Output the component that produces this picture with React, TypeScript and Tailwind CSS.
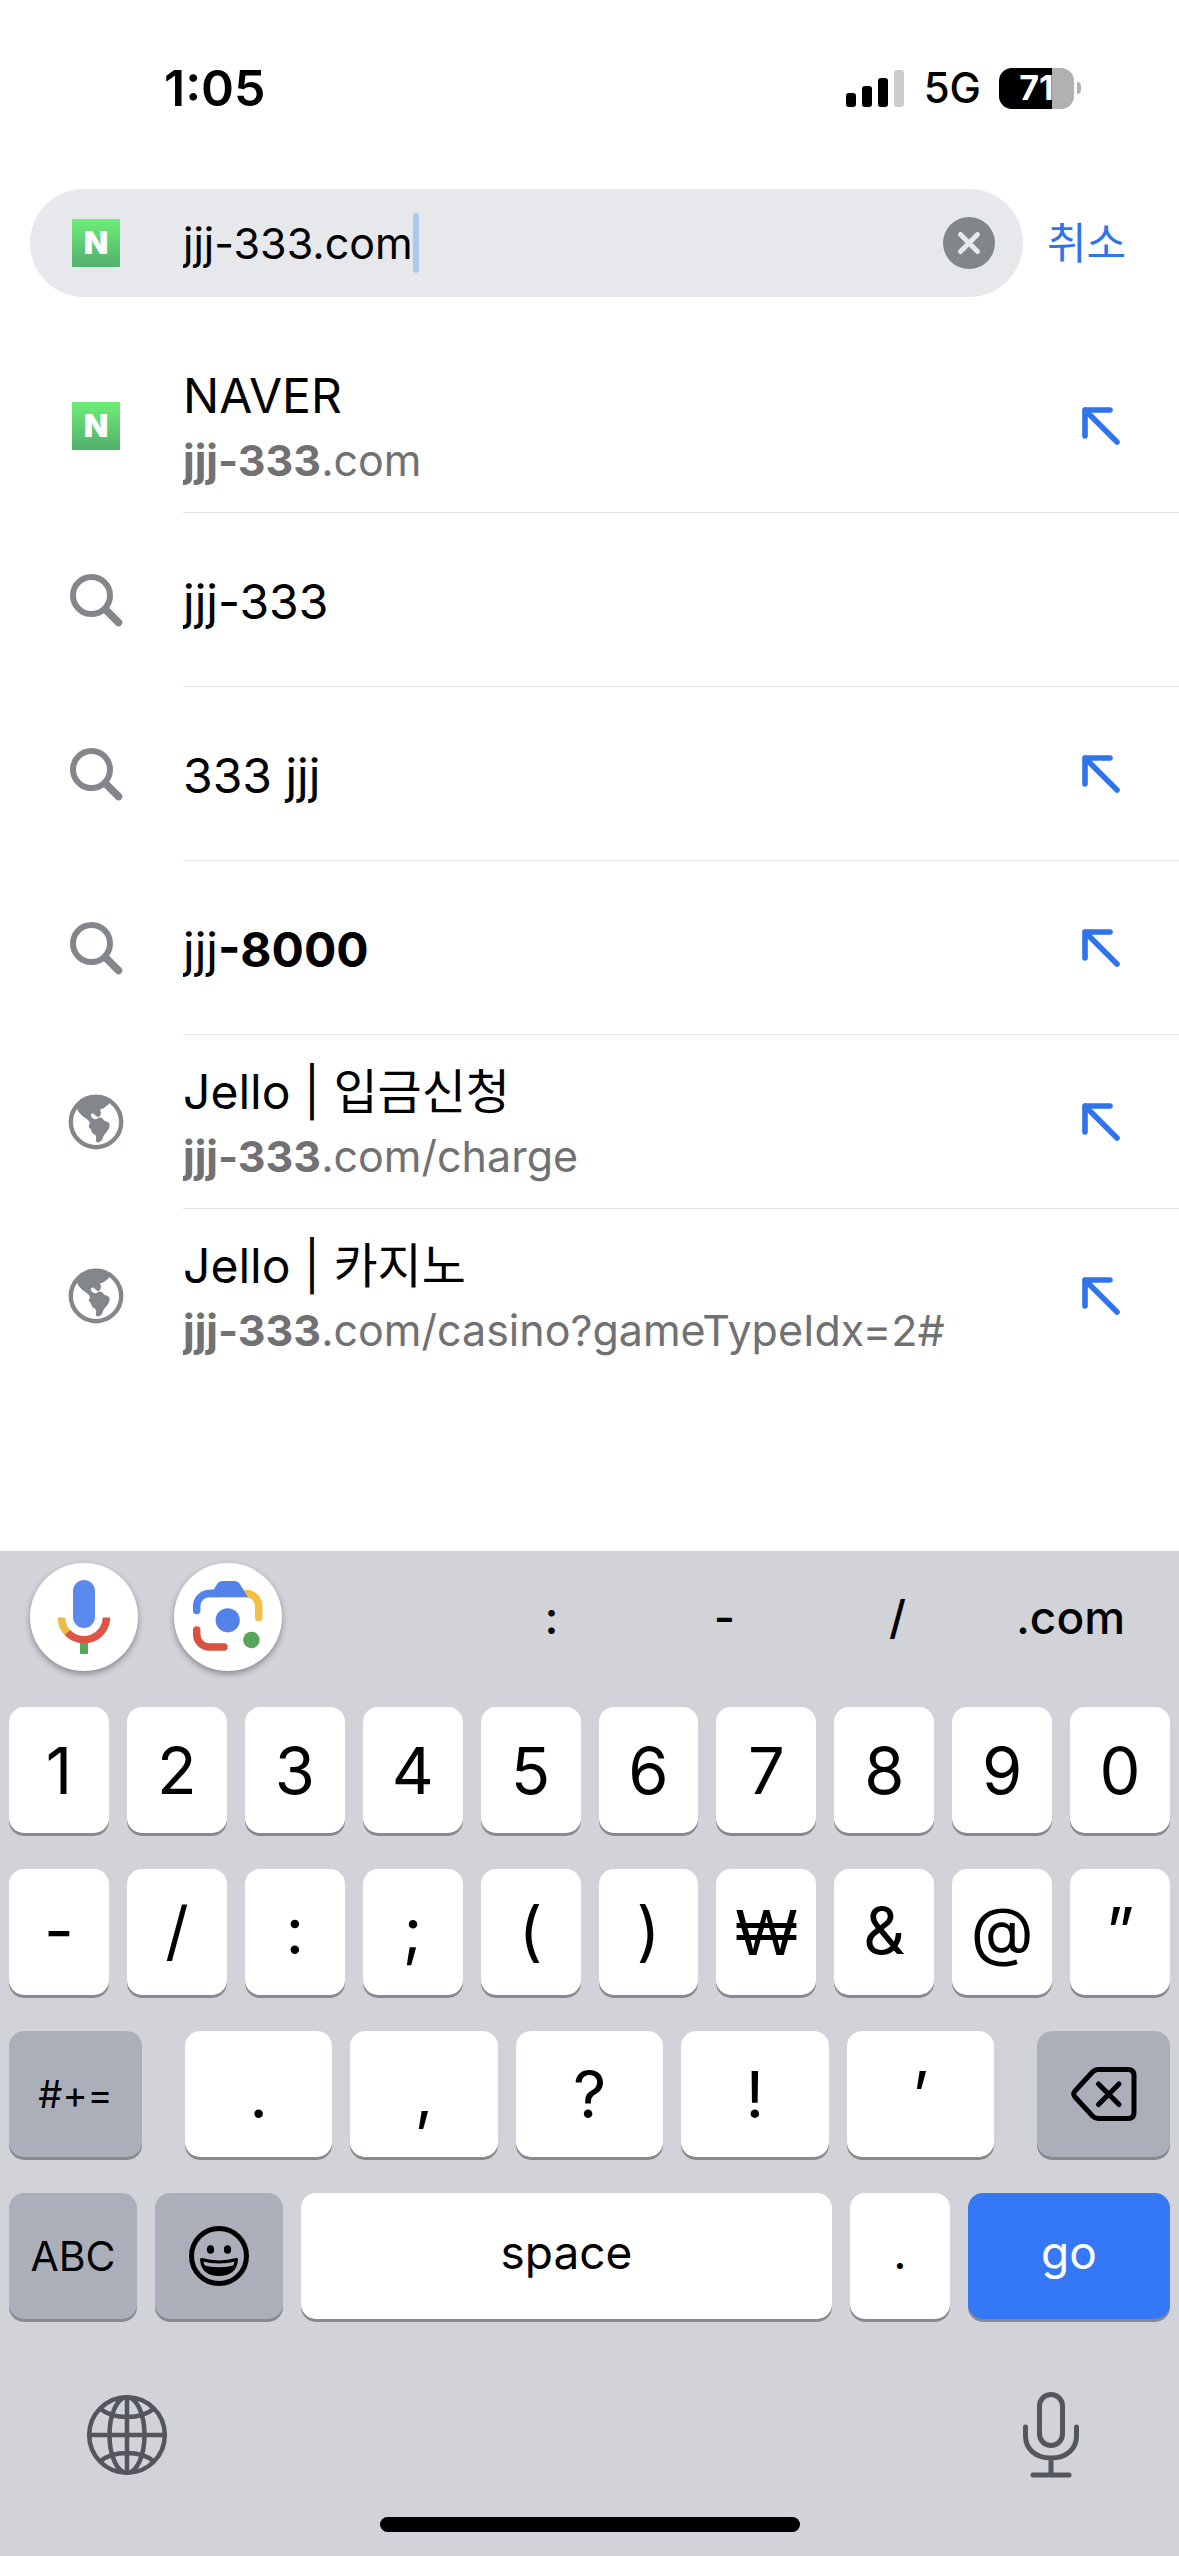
import type { ReactNode } from "react";

type Suggestion = {
  kind: "naver" | "search" | "globe";
  title: ReactNode;
  path?: string;
  canFill: boolean;
};

const suggestions: Suggestion[] = [
  { kind: "naver", title: "NAVER", path: ".com", canFill: true },
  { kind: "search", title: "jjj-333", canFill: false },
  { kind: "search", title: "333 jjj", canFill: true },
  {
    kind: "search",
    title: (
      <>
        jjj<span className="font-bold">-8000</span>
      </>
    ),
    canFill: true,
  },
  { kind: "globe", title: "Jello | 입금신청", path: ".com/charge", canFill: true },
  {
    kind: "globe",
    title: "Jello | 카지노",
    path: ".com/casino?gameTypeIdx=2#",
    canFill: true,
  },
];

const numberKeys = ["1", "2", "3", "4", "5", "6", "7", "8", "9", "0"];
const symbolKeys = ["-", "/", ":", ";", "(", ")", "₩", "&", "@", "”"];
const punctuationKeys = [".", ",", "?", "!", "’"];
const shortcuts = [":", "-", "/", ".com"];

function NaverIcon() {
  return (
    <span className="flex size-12 items-center justify-center bg-gradient-to-b from-[#6eee78] to-[#52b06c] text-[32px] leading-none font-black text-white">
      N
    </span>
  );
}

function SearchIcon() {
  return (
    <svg className="size-14" viewBox="0 0 56 56" fill="none" stroke="#83878c">
      <circle cx="23.5" cy="23.5" r="18.5" strokeWidth="6" />
      <path d="M38 38 50.5 50.5" strokeWidth="7.5" strokeLinecap="round" />
    </svg>
  );
}

function EarthIcon() {
  return (
    <svg className="size-14" viewBox="0 0 56 56" fill="#83878c">
      <circle cx="28" cy="28" r="25.2" fill="none" stroke="#83878c" strokeWidth="4.4" />
      <path d="M9 13C14 6 21 3 28 3c5 0 10 2 13.500 5.500L40 11c-2 1-3 2.500-5 3.500l-3 1 1 3c0 2-1 4-2.500 4.500-2 0-3-2-4.500-3-2-1-4 0-3 2 1 3 4 3.500 6 3 1-1.500 3-2 5-1 1 2 3 3 5.500 4 2.500 1 2.500 4 1.500 6-1.500 4-5 6-6 9.500-.5 2.500-2.500 4.500-4.500 5-2 0-3-1-2.500-3.500 1-3-1-4.500-3-5.500-2-1.500-1-4-3.500-5.500-1-1.500-1-3 .5-4L21 27c-3-3-6-4-8.500-7C10.500 18 9 16 9 13Z" />
    </svg>
  );
}

function FillArrow() {
  return (
    <svg className="size-10" viewBox="0 0 40 40" fill="none" stroke="#2f74e8" strokeWidth="5.6" strokeLinecap="round" strokeLinejoin="round">
      <path d="M29 4H4v26M4 4l32 32" />
    </svg>
  );
}

function StatusBar() {
  return (
    <div className="flex h-[176px] items-center justify-between pr-[98px] pl-[164px]">
      <span className="text-[50px] leading-[60px] font-semibold">1:05</span>
      <div className="flex items-center">
        <svg className="h-[37px] w-[58px]" viewBox="0 0 58 37">
          <rect x="0" y="23" width="10" height="14" rx="3" />
          <rect x="16" y="16" width="10" height="21" rx="3" />
          <rect x="32" y="8" width="10" height="29" rx="3" />
          <rect x="48" y="0" width="10" height="37" rx="3" fill="#cccccc" />
        </svg>
        <span className="ml-5 text-[42px] leading-[60px] font-medium">5G</span>
        <div className="ml-[18px] flex items-center gap-[3px]">
          <div className="flex h-[41px] w-[75px] items-center justify-center overflow-hidden rounded-[13px] bg-gradient-to-r from-black from-71% to-[#b1b1b1] to-71% text-[34px] leading-none font-bold text-white">
            71
          </div>
          <span className="h-3 w-1 rounded-r-full bg-[#b1b1b1]" />
        </div>
      </div>
    </div>
  );
}

function SearchBar() {
  return (
    <div className="flex items-center pt-[13px] pl-[30px]">
      <div className="flex h-[108px] min-w-0 flex-1 items-center rounded-full bg-[#e7e8ec] pr-7 pl-[42px]">
        <NaverIcon />
        <input
          type="text"
          aria-label="주소창"
          defaultValue="jjj-333.com"
          className="ml-[63px] field-sizing-content text-[43px] leading-[60px] outline-none"
        />
        <span className="h-[60px] w-1.5 rounded-full bg-[#a9caec]" />
        <button type="button" aria-label="지우기" className="ml-auto">
          <svg className="size-[52px]" viewBox="0 0 52 52">
            <circle cx="26" cy="26" r="26" fill="#808689" />
            <path d="M17.500 17.500l17 17M34.500 17.500l-17 17" stroke="#e7e8ec" strokeWidth="5" strokeLinecap="round" />
          </svg>
        </button>
      </div>
      <button type="button" className="w-[156px] pl-6 text-left text-[43px] leading-[60px] text-[#2f74e8]">
        취소
      </button>
    </div>
  );
}

function SuggestionRow({ item }: { item: Suggestion }) {
  return (
    <li className="group flex">
      <div className="flex w-[183px] shrink-0 items-center pl-[68px]">
        {item.kind === "naver" && (
          <span className="pl-1">
            <NaverIcon />
          </span>
        )}
        {item.kind === "search" && <SearchIcon />}
        {item.kind === "globe" && <EarthIcon />}
      </div>
      <div className="flex h-[174px] min-w-0 flex-1 items-center border-b border-[#e6e6ea] pr-[58px] group-last:border-transparent">
        <button type="button" className="min-w-0 flex-1 pt-1 text-left">
          <span className="block truncate text-[48px] leading-[64px]">{item.title}</span>
          {item.path && (
            <span className="block truncate text-[43px] leading-[64px] text-[#717173]">
              <span className="font-bold">jjj-333</span>
              {item.path}
            </span>
          )}
        </button>
        {item.canFill && (
          <button type="button" aria-label="검색창에 입력">
            <FillArrow />
          </button>
        )}
      </div>
    </li>
  );
}

function Key({ children, className = "", label }: { children: ReactNode; className?: string; label?: string }) {
  return (
    <button
      type="button"
      aria-label={label}
      className={`flex h-[126px] min-w-0 items-center justify-center rounded-[15px] shadow-[0_3px_0_#88898d] ${className}`}
    >
      {children}
    </button>
  );
}

function Toolbar() {
  return (
    <div className="flex items-center justify-between pr-[22px] pl-[30px]">
      <div className="flex gap-9">
        <button type="button" aria-label="음성 검색" className="size-[108px] rounded-full bg-white shadow-[0_3px_6px_rgba(0,0,0,0.35)]">
          <svg viewBox="0 0 108 108" fill="none">
            <rect x="43" y="17" width="22" height="48" rx="11" fill="#5b8aee" />
            <path d="M54 76v15" stroke="#58a65c" strokeWidth="8" />
            <path d="M31.500 54.500c0 6 2.500 12 6.800 16" stroke="#ecbb43" strokeWidth="7.500" />
            <path d="M37.500 69.500A22.500 22.500 0 0 0 76.500 54.500" stroke="#dc5545" strokeWidth="7.500" />
          </svg>
        </button>
        <button type="button" aria-label="렌즈 검색" className="size-[108px] rounded-full bg-white shadow-[0_3px_6px_rgba(0,0,0,0.35)]">
          <svg viewBox="0 0 108 108" fill="none" strokeWidth="7.500" strokeLinecap="round">
            <path d="M70 30.500h2a12.700 12.700 0 0 1 12.700 12.700V54.500" stroke="#f2bf42" />
            <path d="M22.700 47.500v-4.300a12.700 12.700 0 0 1 12.700-12.700H45" stroke="#5282ea" />
            <path d="M35.500 34.300V26.700H39.500L43.500 20.500Q45 18 48 18H61Q64 18 65.500 20.500L74 34.300Z" fill="#5282ea" />
            <path d="M22.700 67v4.300A12.700 12.700 0 0 0 35.400 84H50" stroke="#d95140" />
            <circle cx="53.700" cy="57.300" r="12.100" fill="#5282ea" />
            <circle cx="77.400" cy="77" r="8.300" fill="#58a65c" />
          </svg>
        </button>
      </div>
      <div className="grid w-[692px] grid-cols-4 text-[46px] leading-[60px] font-medium">
        {shortcuts.map((text) => (
          <button type="button" key={text}>
            {text}
          </button>
        ))}
      </div>
    </div>
  );
}

function Keyboard() {
  return (
    <section className="mt-auto bg-[#d1d3d9] pt-3 pb-6">
      <Toolbar />
      <div className="mt-9 flex flex-col gap-9 px-[9px] text-[65px] leading-none">
        <div className="grid grid-cols-10 gap-[18px]">
          {numberKeys.map((key) => (
            <Key key={key} className="bg-white">
              {key}
            </Key>
          ))}
        </div>
        <div className="grid grid-cols-10 gap-[18px]">
          {symbolKeys.map((key) => (
            <Key key={key} className={key === "₩" ? "bg-white font-['Liberation_Sans']" : "bg-white pb-1"}>
              {key}
            </Key>
          ))}
        </div>
        <div className="flex gap-[43px]">
          <Key className="w-[133px] bg-[#abafba] text-[38px]">#+=</Key>
          <div className="grid flex-1 grid-cols-5 gap-[18px]">
            {punctuationKeys.map((key) => (
              <Key key={key} className="bg-white">
                {key}
              </Key>
            ))}
          </div>
          <Key className="w-[133px] bg-[#abafba]" label="삭제">
            <svg className="h-[54px] w-[66px]" viewBox="0 0 66 54" fill="none" stroke="black" strokeWidth="5" strokeLinecap="round" strokeLinejoin="round">
              <path d="M27 2.500H57Q63 2.500 63 8.500V45.500Q63 51.500 57 51.500H27Q24 51.500 21.500 49L4 30Q1.500 27 4 24L21.500 5Q24 2.500 27 2.500Z" />
              <path d="M27.500 17 48 37.500M48 17 27.500 37.500" />
            </svg>
          </Key>
        </div>
        <div className="flex gap-[18px]">
          <Key className="w-32 bg-[#abafba] text-[41px]">ABC</Key>
          <Key className="w-32 bg-[#abafba]" label="이모티콘">
            <svg className="size-[60px]" viewBox="0 0 60 60">
              <circle cx="30" cy="30" r="27.500" fill="none" stroke="black" strokeWidth="5" />
              <ellipse cx="21.500" cy="23.500" rx="3.600" ry="4.300" />
              <ellipse cx="38.500" cy="23.500" rx="3.600" ry="4.300" />
              <path d="M12.500 33.500Q30 38.500 47.500 33.500Q46 48.500 30 48.500Q14 48.500 12.500 33.500Z" fill="none" stroke="black" strokeWidth="3" strokeLinejoin="round" />
              <path d="M13.500 39Q30 43.500 46.500 39Q43 49 30 49Q17 49 13.500 39Z" />
            </svg>
          </Key>
          <Key className="flex-1 bg-white pb-2 text-[46px]">space</Key>
          <Key className="w-[100px] bg-white pb-2 text-[46px]">.</Key>
          <Key className="w-[202px] bg-[#3578f6] pb-2 text-[46px] text-white">go</Key>
        </div>
      </div>
      <div className="mt-[73px] flex items-center justify-between pr-[98px] pl-[85px]">
        <button type="button" aria-label="키보드 전환">
          <svg className="size-[84px]" viewBox="0 0 84 84" fill="none" stroke="#53565c" strokeWidth="4.500">
            <circle cx="42" cy="42" r="37.800" />
            <ellipse cx="42" cy="42" rx="17.500" ry="37.800" />
            <path d="M42 4v76M4 42h76M15 15.500Q25 24 42 24T69 15.500M15 68.500Q25 60 42 60T69 68.500" />
          </svg>
        </button>
        <button type="button" aria-label="음성 입력">
          <svg className="h-[86px] w-[60px]" viewBox="0 0 60 86" fill="none" stroke="#53565c" strokeWidth="5" strokeLinecap="round">
            <rect x="18.500" y="2.500" width="23" height="51" rx="11.500" />
            <path d="M4.500 35v9c0 13 10 22 25.500 22s25.500-9 25.500-22v-9M30 66v16M12 83h36" />
          </svg>
        </button>
      </div>
      <div className="mx-auto mt-[39px] h-[15px] w-[420px] rounded-full bg-black" />
    </section>
  );
}

export default function App() {
  return (
    <main className="flex min-h-screen flex-col bg-white font-['Inter','Noto_Sans_CJK_KR',sans-serif] text-black">
      <StatusBar />
      <SearchBar />
      <ul className="mt-[42px]">
        {suggestions.map((item, index) => (
          <SuggestionRow key={index} item={item} />
        ))}
      </ul>
      <Keyboard />
    </main>
  );
}
